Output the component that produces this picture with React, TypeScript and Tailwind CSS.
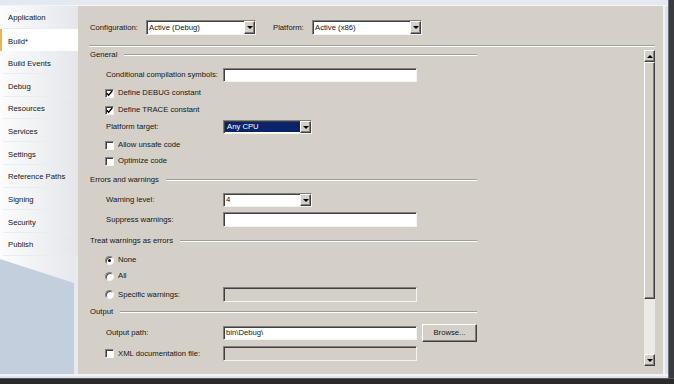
import React from "react";

const tabs = [
  "Application",
  "Build*",
  "Build Events",
  "Debug",
  "Resources",
  "Services",
  "Settings",
  "Reference Paths",
  "Signing",
  "Security",
  "Publish",
];

const raised =
  "bg-[#d4d0c8] border border-t-white border-l-white border-r-[#404040] border-b-[#404040] shadow-[inset_-1px_-1px_0_#808080]";
const sunken =
  "border border-t-[#808080] border-l-[#808080] border-r-[#f4f4f4] border-b-[#f4f4f4] shadow-[inset_1px_1px_0_#404040]";

function Arrow({ up }: { up?: boolean }) {
  return up ? (
    <div className="w-0 h-0 border-x-[3px] border-x-transparent border-b-[3px] border-b-black" />
  ) : (
    <div className="w-0 h-0 border-x-[3px] border-x-transparent border-t-[3px] border-t-black" />
  );
}

function Select({
  value,
  width,
  height = 14,
  selected,
}: {
  value: string;
  width: number;
  height?: number;
  selected?: boolean;
}) {
  return (
    <div
      className={`flex bg-white ${sunken}`}
      style={{ width, height }}
    >
      <div
        className={`flex-1 flex items-center pl-[2px] ${
          selected ? "bg-[#0a246a] text-white m-[1px] mr-0 pl-[1px]" : ""
        }`}
      >
        {value}
      </div>
      <div className={`w-[11px] flex items-center justify-center ${raised}`}>
        <Arrow />
      </div>
    </div>
  );
}

function TextBox({
  value,
  disabled,
  height = 14,
}: {
  value?: string;
  disabled?: boolean;
  height?: number;
}) {
  return (
    <div
      className={`w-[194px] flex items-center pl-[2px] ${sunken} ${
        disabled ? "bg-[#d4d0c8]" : "bg-white"
      }`}
      style={{ height }}
    >
      {value}
    </div>
  );
}

function CheckBox({ checked }: { checked?: boolean }) {
  return (
    <div className={`w-[9px] h-[9px] bg-white flex items-center justify-center ${sunken}`}>
      {checked && (
        <svg width="7" height="7" viewBox="0 0 7 7">
          <path d="M0.8 3.2 L2.6 5.2 L6.2 1" stroke="#000" strokeWidth="1.4" fill="none" />
        </svg>
      )}
    </div>
  );
}

function Radio({ checked }: { checked?: boolean }) {
  return (
    <div className="w-[9px] h-[9px] rounded-full bg-white border border-t-[#808080] border-l-[#808080] border-r-[#f0f0f0] border-b-[#f0f0f0] shadow-[inset_1px_1px_0_#505050] flex items-center justify-center">
      {checked && <div className="w-[3px] h-[3px] rounded-full bg-black" />}
    </div>
  );
}

function Section({ title, mt }: { title: string; mt: number }) {
  return (
    <div className="h-[14px] w-[387px] ml-[12px] flex items-center gap-[7px]" style={{ marginTop: mt }}>
      <span className="whitespace-nowrap">{title}</span>
      <div className="flex-1 h-0 border-t border-t-[#a19d95] border-b border-b-white" />
    </div>
  );
}

function LabelRow({
  label,
  mt,
  h = 14,
  children,
}: {
  label: React.ReactNode;
  mt: number;
  h?: number;
  children?: React.ReactNode;
}) {
  return (
    <div className="flex items-center pl-[27px]" style={{ marginTop: mt, height: h }}>
      <div className="w-[118px] flex items-center">{label}</div>
      {children}
    </div>
  );
}

function Check({ text, checked }: { text: string; checked?: boolean }) {
  return (
    <div className="flex items-center gap-[4px] whitespace-nowrap">
      <CheckBox checked={checked} />
      <span>{text}</span>
    </div>
  );
}

function Opt({ text, checked }: { text: string; checked?: boolean }) {
  return (
    <div className="flex items-center gap-[4px] whitespace-nowrap">
      <Radio checked={checked} />
      <span>{text}</span>
    </div>
  );
}

function ScrollBar() {
  return (
    <div className="w-[11px] h-[316px] mt-[3px] mr-[8px] flex flex-col">
      <div className={`h-[12px] flex items-center justify-center ${raised}`}>
        <Arrow up />
      </div>
      <div className={`h-[237px] ${raised}`} />
      <div className="flex-1 bg-[#ebeae5]" />
      <div className={`h-[12px] flex items-center justify-center ${raised}`}>
        <Arrow />
      </div>
    </div>
  );
}

export default function App() {
  return (
    <div className="w-[674px] h-[384px] flex flex-col bg-[#2f2f2f] font-['Liberation_Sans',Tahoma,sans-serif] text-[7.7px] text-[#141414] leading-none overflow-hidden">
      <div className="flex flex-1 min-h-0">
        <div className="flex-1 flex flex-col">
          {/* top band */}
          <div className="h-[6px] bg-[#e4e9f0] border-b border-b-[#f3f5f8]" />

          <div className="flex flex-1 min-h-0">
            {/* tab strip */}
            <div className="w-[78px] flex flex-col">
              <div className="flex flex-col bg-linear-to-r from-[#fcfcfd] to-[#e4e6ea]">
                {tabs.map((t) => {
                  const active = t === "Build*";
                  return (
                    <div
                      key={t}
                      className={`h-[22.7px] flex flex-col ${
                        active ? "bg-white border-l-2 border-l-[#f0b548]" : ""
                      }`}
                    >
                      <div
                        className={`flex-1 flex items-center pt-[3px] ${
                          active ? "pl-[6px]" : "pl-[8px]"
                        }`}
                      >
                        {t}
                      </div>
                      {!active && <div className="h-px ml-[3px] mr-[8px] bg-[#ebecef]" />}
                    </div>
                  );
                })}
              </div>
              <div className="flex-1 flex">
                <div className="w-[74px] bg-[#c4cfdd]">
                  <svg width="74" height="28" viewBox="0 0 74 28" className="block">
                    <defs>
                      <linearGradient id="slant" x1="0" x2="1" y1="0" y2="0">
                        <stop offset="0" stopColor="#fcfcfd" />
                        <stop offset="1" stopColor="#e6e8ec" />
                      </linearGradient>
                    </defs>
                    <polygon points="0,0 74,0 74,27 0,3" fill="url(#slant)" />
                  </svg>
                </div>
                <div className="w-[4px] bg-[#e6e9ee]" />
              </div>
            </div>

            {/* main panel */}
            <div className="flex-1 bg-[#d4d0c8] flex flex-col">
              <div className="pt-[14px] pl-[12px] flex items-center h-[29px]">
                <span className="w-[56px]">Configuration:</span>
                <Select value="Active (Debug)" width={110} height={15} />
                <span className="ml-[17px] w-[39px]">Platform:</span>
                <Select value="Active (x86)" width={110} height={15} />
              </div>
              <div className="mt-[10px] ml-[11px] w-[566px] h-0 border-t border-t-[#a19d95] border-b border-b-white" />

              <div className="flex flex-1 min-h-0">
                <div className="flex-1 flex flex-col">
                  <Section title="General" mt={1} />
                  <LabelRow label={<span className="pl-px">Conditional compilation symbols:</span>} mt={6}>
                    <TextBox />
                  </LabelRow>
                  <LabelRow label={<Check text="Define DEBUG constant" checked />} mt={4} />
                  <LabelRow label={<Check text="Define TRACE constant" checked />} mt={3} />
                  <LabelRow label={<span className="pl-px">Platform target:</span>} mt={3}>
                    <Select value="Any CPU" width={89} selected />
                  </LabelRow>
                  <LabelRow label={<Check text="Allow unsafe code" />} mt={4} />
                  <LabelRow label={<Check text="Optimize code" />} mt={2} />

                  <Section title="Errors and warnings" mt={5} />
                  <LabelRow label={<span className="pl-px">Warning level:</span>} mt={6}>
                    <Select value="4" width={89} />
                  </LabelRow>
                  <LabelRow label={<span className="pl-px">Suppress warnings:</span>} mt={5} h={15}>
                    <TextBox height={15} />
                  </LabelRow>

                  <Section title="Treat warnings as errors" mt={7} />
                  <LabelRow label={<Opt text="None" checked />} mt={5} />
                  <LabelRow label={<Opt text="All" />} mt={2} />
                  <LabelRow label={<Opt text="Specific warnings:" />} mt={4} h={15}>
                    <TextBox disabled height={15} />
                  </LabelRow>

                  <Section title="Output" mt={3} />
                  <LabelRow label={<span className="pl-px">Output path:</span>} mt={5} h={18}>
                    <TextBox value="bin\Debug\" />
                    <div className={`ml-[5px] w-[55px] h-[18px] flex items-center justify-center ${raised}`}>
                      Browse...
                    </div>
                  </LabelRow>
                  <LabelRow label={<Check text="XML documentation file:" />} mt={4} h={15}>
                    <TextBox disabled height={15} />
                  </LabelRow>
                </div>
                <ScrollBar />
              </div>
            </div>

            {/* right light border */}
            <div className="w-[5px] bg-[#dde3eb] border-l-2 border-l-[#f2f2f2]" />
          </div>

          <div className="h-[4px] bg-[#dde3eb] border-t-2 border-t-[#f2f2f2]" />
        </div>
        <div className="w-[6px] bg-[#3a3b3e] border-l border-l-[#6c717a]" />
      </div>
      <div className="h-[6px] bg-[#2a2a2a] border-t border-t-[#55585e]" />
    </div>
  );
}
